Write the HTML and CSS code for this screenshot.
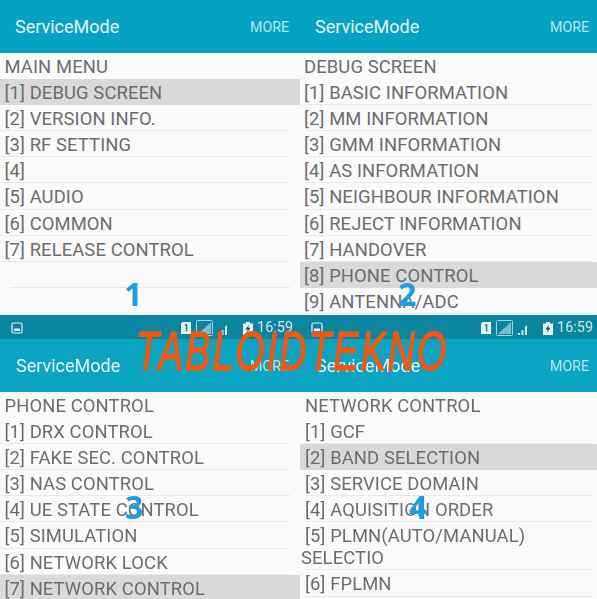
FILE: index.html
```html
<!DOCTYPE html>
<html lang="en">
<head>
<meta charset="utf-8">
<title>ServiceMode</title>
<link rel="stylesheet" href="styles.css">
</head>
<body>
<main class="collage">
  <section class="panel">
    <header class="appbar"><span class="title">ServiceMode</span><span class="more">MORE</span></header>
    <ul class="list">
      <li>MAIN MENU</li>
      <li class="on">[1] DEBUG SCREEN</li>
      <li>[2] VERSION INFO.</li>
      <li>[3] RF SETTING</li>
      <li>[4]</li>
      <li>[5] AUDIO</li>
      <li>[6] COMMON</li>
      <li>[7] RELEASE CONTROL</li>
      <li class="blank">&nbsp;</li>
    </ul>
  </section>
  <section class="panel right">
    <header class="appbar"><span class="title">ServiceMode</span><span class="more">MORE</span></header>
    <ul class="list">
      <li>DEBUG SCREEN</li>
      <li>[1] BASIC INFORMATION</li>
      <li>[2] MM INFORMATION</li>
      <li>[3] GMM INFORMATION</li>
      <li>[4] AS INFORMATION</li>
      <li>[5] NEIGHBOUR INFORMATION</li>
      <li>[6] REJECT INFORMATION</li>
      <li>[7] HANDOVER</li>
      <li class="on">[8] PHONE CONTROL</li>
      <li>[9] ANTENNA/ADC</li>
    </ul>
  </section>
  <section class="panel lower">
    <div class="status">
      <svg class="pic" viewBox="0 0 12 12"><rect x="1" y="1" width="10" height="10" rx="1.5" fill="none" stroke="#e4f3f7" stroke-width="1.2"/><rect x="3" y="6.5" width="6" height="2.5" fill="#e4f3f7"/></svg>
      <span class="spacer"></span>
      <svg class="sim" viewBox="0 0 10 12"><path d="M0 1.5 1.5 0H10V12H0Z" fill="#e4f3f7"/><path d="M4 3.4 5.6 2.8V9.4" fill="none" stroke="#1b7f97" stroke-width="1.4"/></svg>
      <svg class="net" viewBox="0 0 17 16"><rect x=".5" y=".5" width="16" height="15" rx="1" fill="none" stroke="#a9d3de"/><path d="M2 14 15 2V14Z" fill="#7fbccb"/></svg>
      <svg class="bars" viewBox="0 0 11 11"><path d="M0 11H2V9H0ZM3.500 11H5.500V6H3.500ZM7 11H9V1L7 3Z" fill="#d7ecf1"/></svg>
      <svg class="batt" viewBox="0 0 10 13"><path d="M3 0H7V1.500H10V13H0V1.500H3Z" fill="#e4f3f7"/><path d="M6 2.500 2.500 7.500H4.800L3.800 11 7.500 5.800H5.200Z" fill="#14485a"/></svg>
      <span class="time">16:59</span>
    </div>
    <header class="appbar"><span class="title">ServiceMode</span><span class="more">MORE</span></header>
    <ul class="list">
      <li>PHONE CONTROL</li>
      <li>[1] DRX CONTROL</li>
      <li>[2] FAKE SEC. CONTROL</li>
      <li>[3] NAS CONTROL</li>
      <li>[4] UE STATE CONTROL</li>
      <li>[5] SIMULATION</li>
      <li>[6] NETWORK LOCK</li>
      <li class="on">[7] NETWORK CONTROL</li>
    </ul>
  </section>
  <section class="panel lower right">
    <div class="status">
      <svg class="pic" viewBox="0 0 12 12"><rect x="1" y="1" width="10" height="10" rx="1.5" fill="none" stroke="#e4f3f7" stroke-width="1.2"/><rect x="3" y="6.5" width="6" height="2.5" fill="#e4f3f7"/></svg>
      <span class="spacer"></span>
      <svg class="sim" viewBox="0 0 10 12"><path d="M0 1.500 1.500 0H10V12H0Z" fill="#e4f3f7"/><path d="M4 3.400 5.600 2.800V9.400" fill="none" stroke="#1b7f97" stroke-width="1.400"/></svg>
      <svg class="net" viewBox="0 0 17 16"><rect x=".5" y=".5" width="16" height="15" rx="1" fill="none" stroke="#a9d3de"/><path d="M2 14 15 2V14Z" fill="#7fbccb"/></svg>
      <svg class="bars" viewBox="0 0 11 11"><path d="M0 11H2V9H0ZM3.500 11H5.500V6H3.500ZM7 11H9V1L7 3Z" fill="#d7ecf1"/></svg>
      <svg class="batt" viewBox="0 0 10 13"><path d="M3 0H7V1.500H10V13H0V1.500H3Z" fill="#e4f3f7"/><path d="M6 2.500 2.500 7.500H4.800L3.800 11 7.500 5.800H5.200Z" fill="#14485a"/></svg>
      <span class="time">16:59</span>
    </div>
    <header class="appbar"><span class="title">ServiceMode</span><span class="more">MORE</span></header>
    <ul class="list">
      <li>NETWORK CONTROL</li>
      <li>[1] GCF</li>
      <li class="on">[2] BAND SELECTION</li>
      <li>[3] SERVICE DOMAIN</li>
      <li>[4] AQUISITION ORDER</li>
      <li class="wrap">[5] PLMN(AUTO/MANUAL) SELECTIO</li>
      <li>[6] FPLMN</li>
    </ul>
  </section>
  <span class="num n1">1</span>
  <span class="num n2">2</span>
  <span class="num n3">3</span>
  <span class="num n4">4</span>
  <span class="mark">TABLOIDTEKNO</span>
</main>
</body>
</html>
```
FILE: styles.css
```css
* { box-sizing: border-box; }
html, body { margin: 0; padding: 0; background: #fafafa; }
body { width: 597px; height: 599px; overflow: hidden; font-family: Roboto, "Liberation Sans", sans-serif; }

.collage {
  position: relative;
  display: grid;
  grid-template-columns: 300px 297px;
  grid-template-rows: 315px 284px;
  width: 597px;
  height: 599px;
  overflow: hidden;
  filter: blur(.45px);
}

.panel { display: flex; flex-direction: column; overflow: hidden; background: #fafafa; }

.status {
  display: flex;
  align-items: center;
  flex: none;
  height: 24px;
  padding: 2px 8px 0 11px;
  background: #0b85a0;
  color: #cfe7ee;
}
.right .status { padding-right: 5px; }
.spacer { flex: 1; }
.pic { width: 12px; height: 12px; }
.sim { width: 10px; height: 12px; margin-right: 5px; }
.net { width: 17px; height: 16px; margin-right: 5px; }
.bars { width: 11px; height: 11px; margin-right: 14px; margin-top: 2px; }
.batt { width: 10px; height: 13px; margin-right: 4px; }
.time { font-size: 14.500px; line-height: 22px; width: 35px; }

.appbar {
  display: flex;
  align-items: center;
  justify-content: space-between;
  flex: none;
  height: 52.500px;
  padding: 0 11px 0 15px;
  background: #05a3c1;
  color: #e6f6fa;
}
.right .appbar { padding-right: 8px; }
.lower .appbar { padding-left: 16px; background: #0ba5c3; }
.title { font-size: 18px; }
.more { font-size: 14.200px; padding-top: 1px; color: #b5e7f1; }

.list { list-style: none; margin: 0; padding: 0; }
.list li {
  height: 26.200px;
  padding-left: 4.500px;
  font-size: 18.400px;
  line-height: 27.600px;
  letter-spacing: .12px;
  color: #6d6d6d;
  white-space: nowrap;
  background: linear-gradient(#e8e8e8, #e8e8e8) left bottom / 290px 1px no-repeat;
}
.list li:first-child { background: none; }
.list li.on { background: #d9d9d9; }
.list li.blank { height: 26px; background-position: 10px bottom; background-size: 280px 1px; }

.right .list li { padding-left: 4px; background-position: 6px bottom; background-size: 286px 1px; }
.right .list li:first-child { background: none; }
.right .list li.on { background: #d9d9d9; }
.lower.right .list li { padding-left: 5px; }
.lower.right .list li.wrap {
  height: 48px;
  padding: 2.500px 40px 0 1px;
  text-indent: 4px;
  line-height: 22px;
  white-space: normal;
}

.num {
  position: absolute;
  font-family: "Open Sans", "DejaVu Sans", sans-serif;
  font-size: 32px;
  font-weight: 700;
  line-height: 36px;
  color: #1d9de2;
}
.n1 { left: 124px; top: 276px; }
.n2 { left: 398px; top: 276px; }
.n3 { left: 125px; top: 489px; }
.n4 { left: 409px; top: 489px; }

.mark {
  position: absolute;
  left: 136px;
  top: 320px;
  font-family: "Liberation Sans", sans-serif;
  font-size: 55px;
  font-style: italic;
  line-height: 62px;
  letter-spacing: 3.200px;
  color: #f4570f;
  white-space: nowrap;
  -webkit-text-stroke: 1.500px #f4570f;
  transform: scaleX(.68);
  transform-origin: left top;
}
```
